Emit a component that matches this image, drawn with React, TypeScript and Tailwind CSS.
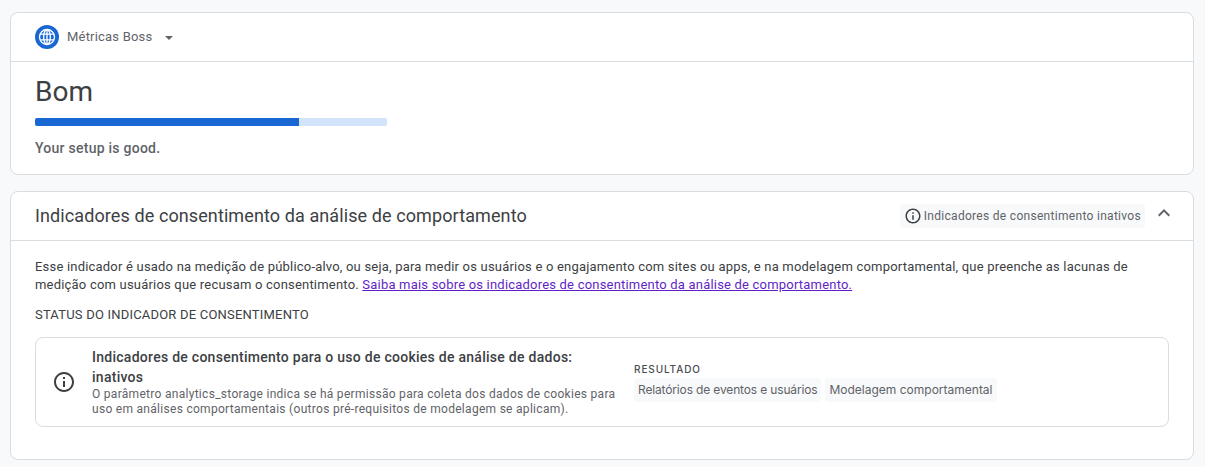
function InfoIcon({ size }: { size: number }) {
  return (
    <svg width={size} height={size} viewBox="0 0 24 24" fill="#3c4043" className="shrink-0">
      <path d="M11 7h2v2h-2zm0 4h2v6h-2zm1-9C6.48 2 2 6.48 2 12s4.48 10 10 10 10-4.48 10-10S17.52 2 12 2zm0 18c-4.41 0-8-3.59-8-8s3.59-8 8-8 8 3.59 8 8-3.59 8-8 8z" />
    </svg>
  );
}

function GlobeBadge() {
  return (
    <div className="flex h-6 w-6 items-center justify-center rounded-full bg-[#1967d2]">
      <svg width="20" height="20" viewBox="0 0 24 24" fill="none" stroke="#fff" strokeWidth="1.6">
        <circle cx="12" cy="12" r="9" />
        <ellipse cx="12" cy="12" rx="4" ry="9" />
        <path d="M12 3v18M3.8 8.5h16.4M3.8 15.5h16.4" />
      </svg>
    </div>
  );
}

export default function App() {
  return (
    <div className="flex min-h-[467px] flex-col gap-4 bg-[#f8f9fa] pl-[10px] pr-[11px] pt-3 font-['Roboto',sans-serif] text-[#3c4043]">
      <section className="rounded-lg border border-[#dadce0] bg-white">
        <header className="flex h-[49px] items-center border-b border-[#dadce0] pl-6">
          <GlobeBadge />
          <span className="ml-2 text-[13px] tracking-[0.2px] text-[#5f6368]">Métricas Boss</span>
          <svg width="8" height="4" viewBox="0 0 8 4" className="ml-[13px] mt-[1px]" fill="#5f6368">
            <path d="M0 0h8L4 4z" />
          </svg>
        </header>
        <div className="px-6 pb-4 pt-3">
          <h1 className="text-[28px] leading-[36px] text-[#3c4043]">Bom</h1>
          <div className="mt-2 h-2 w-[352px] overflow-hidden rounded-[2px] bg-[#d2e3fc]">
            <div className="h-full w-[75%] bg-[#1967d2]" />
          </div>
          <p className="mt-3 text-[14px] font-medium leading-[20px] tracking-[0.25px] text-[#5f6368]">
            Your setup is good.
          </p>
        </div>
      </section>

      <section className="rounded-lg border border-[#dadce0] bg-white">
        <header className="flex h-[49px] items-center border-b border-[#dadce0] pl-6 pr-[17px]">
          <h2 className="text-[18px] leading-6 tracking-[0.1px] text-[#3c4043]">
            Indicadores de consentimento da análise de comportamento
          </h2>
          <div className="ml-auto flex h-6 items-center gap-[2px] rounded-[3px] bg-[#f8f9fa] px-1 text-[12px] tracking-[0.3px] text-[#5f6368]">
            <InfoIcon size={18} />
            Indicadores de consentimento inativos
          </div>
          <svg width="24" height="24" viewBox="0 0 24 24" fill="#5f6368" className="mb-[6px] ml-[7px]">
            <path d="M12 8l-6 6 1.41 1.41L12 10.83l4.59 4.58L18 14z" />
          </svg>
        </header>
        <div className="px-6 pb-8 pt-[17px]">
          <p className="text-[13px] leading-[18px] tracking-[0.2px] text-[#3c4043]">
            Esse indicador é usado na medição de público-alvo, ou seja, para medir os usuários e o engajamento com sites ou apps, e na modelagem comportamental, que preenche as lacunas de medição com usuários que recusam o consentimento.{" "}
            <a className="text-[#5f1fc7] underline">Saiba mais sobre os indicadores de consentimento da análise de comportamento.</a>
          </p>
          <h3 className="mt-3 text-[13px] leading-[18px] tracking-[0.2px] text-[#3c4043]">
            STATUS DO INDICADOR DE CONSENTIMENTO
          </h3>
          <div className="mt-[13px] flex h-[90px] items-center rounded-lg border border-[#dadce0] pl-4">
            <InfoIcon size={24} />
            <div className="ml-4 w-[530px]">
              <div className="max-w-[500px] text-[14px] font-medium leading-[20px] tracking-[0.27px] text-[#3c4043]">
                Indicadores de consentimento para o uso de cookies de análise de dados: inativos
              </div>
              <div className="text-[12px] leading-[15px] tracking-[0.29px] text-[#5f6368]">
                O parâmetro analytics_storage indica se há permissão para coleta dos dados de cookies para uso em análises comportamentais (outros pré-requisitos de modelagem se aplicam).
              </div>
            </div>
            <div className="ml-[12px]">
              <div className="font-['Inter',sans-serif] text-[10px] font-medium leading-[14px] tracking-[0.9px] text-[#4a4d51]">
                RESULTADO
              </div>
              <div className="mt-[2px] flex gap-1 font-['Inter',sans-serif] text-[12px] leading-[18px] text-[#5f6368]">
                <span className="rounded-[3px] bg-[#f8f9fa] px-1 py-[3px] tracking-[-0.15px]">Relatórios de eventos e usuários</span>
                <span className="rounded-[3px] bg-[#f8f9fa] px-1 py-[3px]">Modelagem comportamental</span>
              </div>
            </div>
          </div>
        </div>
      </section>
    </div>
  );
}
